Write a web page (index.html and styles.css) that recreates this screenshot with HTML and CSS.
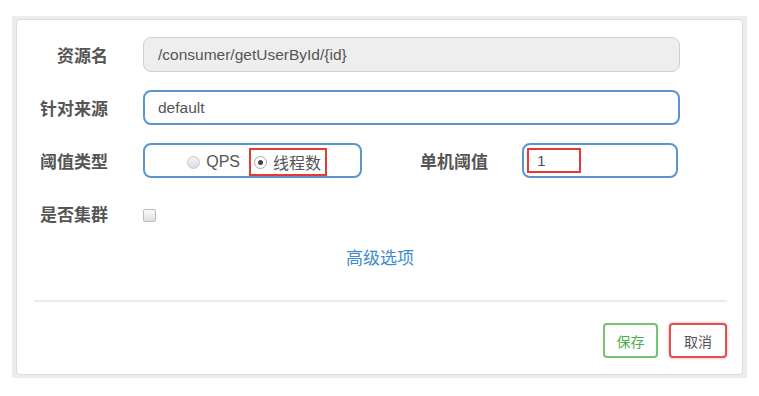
FILE: index.html
```html
<!DOCTYPE html>
<html lang="zh-CN">
<head>
  <meta charset="UTF-8">
  <meta name="viewport" content="width=device-width, initial-scale=1.0">
  <title>编辑流控规则</title>
  <link rel="stylesheet" href="styles.css">
</head>
<body>
  <div class="frame">
    <div class="card">
      <form class="rule-form">
        <div class="row">
          <label class="label">资源名</label>
          <input class="input input-disabled" type="text" value="/consumer/getUserById/{id}" disabled>
        </div>

        <div class="row">
          <label class="label">针对来源</label>
          <input class="input input-focus" type="text" value="default">
        </div>

        <div class="row">
          <label class="label">阈值类型</label>
          <div class="radio-box">
            <span class="radio-item"><span class="radio"></span>QPS</span>
            <span class="radio-item marked"><span class="radio checked"></span>线程数</span>
          </div>
          <label class="label label-mid">单机阈值</label>
          <div class="input-wrap">
            <input class="input input-focus input-small" type="text" value="1">
            <span class="mark"></span>
          </div>
        </div>

        <div class="row row-check">
          <label class="label">是否集群</label>
          <span class="checkbox"></span>
        </div>

        <div class="advanced"><a href="#">高级选项</a></div>
      </form>

      <div class="divider"></div>

      <div class="actions">
        <button class="btn btn-save" type="button">保存</button>
        <button class="btn btn-cancel" type="button">取消</button>
      </div>
    </div>
  </div>
</body>
</html>
```

FILE: styles.css
```css
body {
  margin: 0;
  padding: 0;
  background: #fff;
  font-family: "Liberation Sans", "Noto Sans CJK SC", sans-serif;
  color: #555;
}
.frame {
  margin: 16px 12px 0 12px;
  width: 727px;
  padding: 3px 4px 3px 4px;
  background: #ececec;
}
.card {
  background: #fff;
  border: 1px solid #dcdcdc;
  border-radius: 4px;
  padding: 17px 15px 16px 0;
}
.rule-form {
  margin: 0;
}
.row {
  display: flex;
  align-items: center;
  height: 35px;
  margin-bottom: 18px;
}
.label {
  width: 91px;
  flex: none;
  text-align: right;
  font-size: 17px;
  font-weight: bold;
  color: #555;
  margin-right: 35px;
}
.label-mid {
  width: 126px;
  margin-right: 34px;
}
.input {
  box-sizing: border-box;
  height: 35px;
  width: 537px;
  padding: 0 14px;
  border: 1px solid #ccc;
  border-radius: 8px;
  font-family: "Liberation Sans", "Noto Sans CJK SC", sans-serif;
  font-size: 15.5px;
  color: #555;
  outline: none;
}
.input-disabled {
  background: #eee;
  border-color: #cfcfcf;
  color: #555;
}
.input-focus {
  border: 2px solid #5b95cf;
  padding-left: 13px;
}
.input-wrap {
  position: relative;
}
.input-small {
  width: 156px;
}
.mark {
  position: absolute;
  left: 5px;
  top: 5px;
  width: 50px;
  height: 21px;
  border: 2px solid #e53935;
}
.radio-box {
  box-sizing: border-box;
  width: 219px;
  height: 35px;
  border: 2px solid #5b95cf;
  border-radius: 8px;
  display: flex;
  align-items: center;
  justify-content: flex-end;
  padding: 3px 33px 0 0;
  font-size: 16px;
  color: #555;
}
.radio-item {
  display: flex;
  align-items: center;
  gap: 6px;
}
.radio-item + .radio-item {
  margin-left: 9px;
}
.marked {
  box-sizing: border-box;
  height: 28px;
  padding: 0 4px 0 3px;
  border: 2px solid #e53935;
}
.radio {
  width: 11px;
  height: 11px;
  border: 1px solid #c8c8c8;
  border-radius: 50%;
  background: linear-gradient(#f4f4f4, #dcdcdc);
  position: relative;
}
.radio.checked {
  background: #fff;
  border-color: #aaa;
}
.radio.checked::after {
  content: "";
  position: absolute;
  left: 3px;
  top: 3px;
  width: 5px;
  height: 5px;
  border-radius: 50%;
  background: #444;
}
.row-check {
  margin-bottom: 16px;
}
.checkbox {
  width: 11px;
  height: 11px;
  margin-top: 3px;
  border: 1px solid #bdbdbd;
  border-radius: 2px;
  background: linear-gradient(#fafafa, #e0e0e0);
}
.advanced {
  text-align: center;
  line-height: 24px;
  font-size: 17px;
  padding-left: 16px;
}
.advanced a {
  color: #3f8dd0;
  text-decoration: none;
}
.divider {
  height: 2px;
  background: #ebebeb;
  margin: 29px 0 21px 17px;
}
.actions {
  display: flex;
  justify-content: flex-end;
  gap: 11px;
}
.btn {
  height: 35px;
  padding: 0;
  background: #fff;
  border-radius: 4px;
  font-family: "Liberation Sans", "Noto Sans CJK SC", sans-serif;
  font-size: 14px;
  white-space: nowrap;
  cursor: pointer;
}
.btn-save {
  width: 55px;
  border: 2px solid #72c472;
  color: #4cae4c;
}
.btn-cancel {
  width: 58px;
  border: 2px solid #d9534f;
  color: #555;
  box-shadow: 0 0 3px rgba(217, 83, 79, 0.6);
}
```
